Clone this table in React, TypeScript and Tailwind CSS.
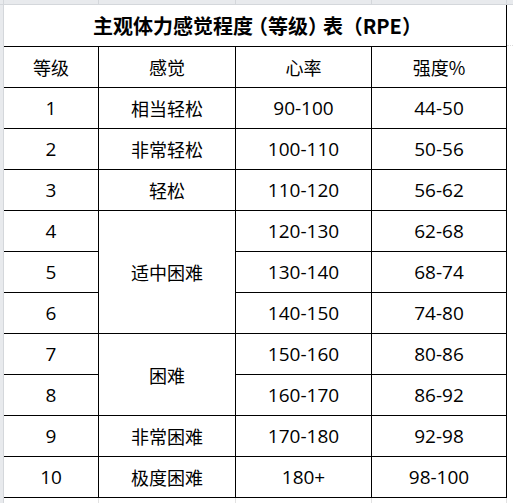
const rows = [
  { level: "1", feel: "相当轻松", hr: "90-100", pct: "44-50" },
  { level: "2", feel: "非常轻松", hr: "100-110", pct: "50-56" },
  { level: "3", feel: "轻松", hr: "110-120", pct: "56-62" },
  { level: "4", feel: "适中困难", span: 3, hr: "120-130", pct: "62-68" },
  { level: "5", hr: "130-140", pct: "68-74" },
  { level: "6", hr: "140-150", pct: "74-80" },
  { level: "7", feel: "困难", span: 2, hr: "150-160", pct: "80-86" },
  { level: "8", hr: "160-170", pct: "86-92" },
  { level: "9", feel: "非常困难", hr: "170-180", pct: "92-98" },
  { level: "10", feel: "极度困难", hr: "180+", pct: "98-100" },
];

const cell = "bg-white flex items-center justify-center text-[18px] text-black leading-none";
const num = "bg-white flex items-center justify-center text-[19px] text-black leading-none font-['Open_Sans',sans-serif]";

const App = () => {
  return (
    <div
      className="w-[513px] h-[503px] bg-white overflow-hidden flex flex-col"
      style={{ fontFamily: '"Noto Sans CJK SC", "Noto Sans", sans-serif' }}
    >
      {/* sheet column header strip */}
      <div className="h-[5px] flex bg-[#e8eaed] border-b border-[#d4d7db]">
        <div className="w-[4px] border-r border-[#d4d7db]" />
        <div className="w-[95px] border-r border-[#d4d7db]" />
        <div className="w-[137px] border-r border-[#d4d7db]" />
        <div className="w-[136px] border-r border-[#d4d7db]" />
        <div className="w-[135px] border-r border-[#d4d7db]" />
      </div>

      <div className="flex">
        <div className="w-[4px] bg-[#e8eaed] border-r border-[#d4d7db]" />
        <div className="grid grid-cols-[94px_136px_135px_134px] grid-rows-[41px_repeat(11,40px)] gap-px bg-black pr-px pb-px">
          <div className="col-span-4 bg-white flex items-center justify-center text-[20px] font-bold text-black whitespace-nowrap">
            <span>
              主观体力感觉程度<span className="-ml-[5px]">（</span>等级<span className="-mr-[5px]">）</span>表 <span className="-ml-[5px]">（</span>RPE<span className="-mr-[5px]">）</span>
            </span>
          </div>
          <div className={cell}>等级</div>
          <div className={cell}>感觉</div>
          <div className={cell}>心率</div>
          <div className={cell}>强度%</div>
          {rows.map((r) => (
            <div key={r.level} className="contents">
              <div className={num}>{r.level}</div>
              {r.feel && (
                <div
                  className={`${cell} ${r.span === 3 ? "row-span-3" : r.span === 2 ? "row-span-2" : ""}`}
                >
                  {r.feel}
                </div>
              )}
              <div className={num}>{r.hr}</div>
              <div className={num}>{r.pct}</div>
            </div>
          ))}
        </div>
        <div className="flex-1 flex flex-col">
          <div className="h-[41px] border-b border-dotted border-[#dcdcdc]" />
        </div>
      </div>

      {/* faint sheet gridlines below */}
      <div className="flex-1 flex">
        <div className="w-[4px] bg-[#e8eaed] border-r border-[#d4d7db]" />
        <div className="w-[95px] border-r border-[#e2e2e2]" />
        <div className="w-[137px] border-r border-[#e2e2e2]" />
        <div className="w-[136px] border-r border-[#e2e2e2]" />
        <div className="w-[135px] border-r border-[#e2e2e2]" />
      </div>
    </div>
  );
};

export default App;
